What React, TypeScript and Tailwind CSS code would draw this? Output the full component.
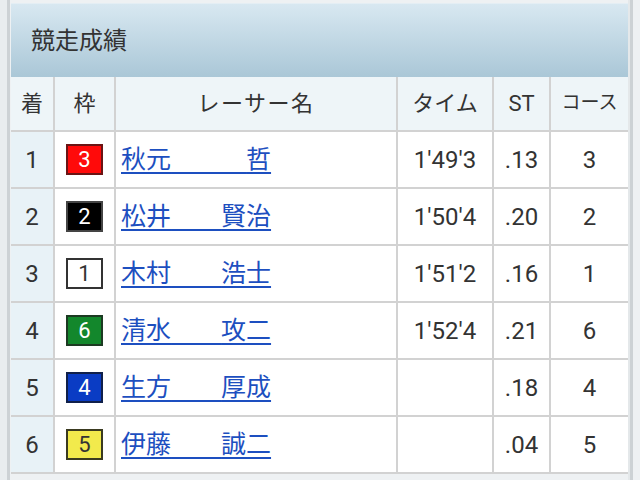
import React from 'react';

interface Row {
  rank: string;
  frame: number;
  first: string;
  last: string;
  gap: string;
  time: string;
  st: string;
  course: string;
}

const rows: Row[] = [
  { rank: '1', frame: 3, first: '秋元', last: '哲', gap: '\u3000\u3000\u3000', time: "1'49'3", st: '.13', course: '3' },
  { rank: '2', frame: 2, first: '松井', last: '賢治', gap: '\u3000\u3000', time: "1'50'4", st: '.20', course: '2' },
  { rank: '3', frame: 1, first: '木村', last: '浩士', gap: '\u3000\u3000', time: "1'51'2", st: '.16', course: '1' },
  { rank: '4', frame: 6, first: '清水', last: '攻二', gap: '\u3000\u3000', time: "1'52'4", st: '.21', course: '6' },
  { rank: '5', frame: 4, first: '生方', last: '厚成', gap: '\u3000\u3000', time: '', st: '.18', course: '4' },
  { rank: '6', frame: 5, first: '伊藤', last: '誠二', gap: '\u3000\u3000', time: '', st: '.04', course: '5' },
];

const frameStyles: Record<number, string> = {
  1: 'bg-white border-[#333] text-[#333]',
  2: 'bg-black border-[#444] text-white',
  3: 'bg-[#ff0a0a] border-[#6a1414] text-white',
  4: 'bg-[#0a3cc4] border-[#10204a] text-white',
  5: 'bg-[#f2ea4c] border-[#3a3a20] text-[#333]',
  6: 'bg-[#13872c] border-[#1c3a22] text-white',
};

const font = "font-['Roboto','Noto_Sans_CJK_JP',sans-serif]";

export default function App() {
  return (
    <div className={`w-[640px] h-[480px] overflow-hidden bg-[#eef1f3] flex ${font}`}>
      <div className="w-[7px] bg-[#e9edef]" />
      <div className="w-[3px] bg-[#cdd2d5]" />
      <div className="w-[1px] bg-[#eef1f3]" />

      <div className="w-[617px] pt-[3px] flex flex-col">
        <div className="h-[74px] flex items-center pl-[20px] bg-gradient-to-b from-[#d8e8f1] to-[#aac7d7] border-t border-[#e4eef4]">
          <span className="text-[24px] text-[#333] leading-none">競走成績</span>
        </div>

        <div className="flex flex-col text-[#333]">
          <div className="flex h-[53px] bg-[#eef5f8] text-[22px]">
            <div className="w-[42px] flex items-center justify-center">着</div>
            <div className="w-[61px] border-l-2 border-[#d2d2d2] flex items-center justify-center">枠</div>
            <div className="w-[282px] border-l-2 border-[#d2d2d2] flex items-center justify-center tracking-[1.5px]">レーサー名</div>
            <div className="w-[96px] border-l-2 border-[#d2d2d2] flex items-center justify-center">タイム</div>
            <div className="w-[57px] border-l-2 border-[#d2d2d2] flex items-center justify-center">ST</div>
            <div className="w-[79px] border-l-2 border-[#d2d2d2] flex items-center justify-center text-[19px]">コース</div>
          </div>

          {rows.map((r) => (
            <div key={r.rank} className="flex h-[57px] border-t-2 border-[#d2d2d2] bg-white text-[24px]">
              <div className="w-[42px] bg-[#e8f2f7] flex items-center justify-center">{r.rank}</div>
              <div className="w-[61px] border-l-2 border-[#d2d2d2] flex items-center justify-center">
                <div
                  className={`w-[37px] h-[31px] border-2 flex items-center justify-center text-[22px] leading-none ${frameStyles[r.frame]}`}
                >
                  {r.frame}
                </div>
              </div>
              <div className="w-[282px] border-l-2 border-[#d2d2d2] flex items-center pl-[5px]">
                <a href="#" className="text-[25px] text-[#1d4fc0] underline decoration-[2px] underline-offset-[4px] whitespace-pre">
                  {r.first}
                  {r.gap}
                  {r.last}
                </a>
              </div>
              <div className="w-[96px] border-l-2 border-[#d2d2d2] flex items-center justify-center">{r.time}</div>
              <div className="w-[57px] border-l-2 border-[#d2d2d2] flex items-center justify-center">{r.st}</div>
              <div className="w-[79px] border-l-2 border-[#d2d2d2] flex items-center justify-center">{r.course}</div>
            </div>
          ))}
          <div className="border-t-2 border-[#d2d2d2]" />
        </div>
      </div>

      <div className="w-[2px] bg-[#e4e8ea]" />
      <div className="w-[3px] bg-[#cdd2d5]" />
      <div className="flex-1 bg-[#eef1f3]" />
    </div>
  );
}
